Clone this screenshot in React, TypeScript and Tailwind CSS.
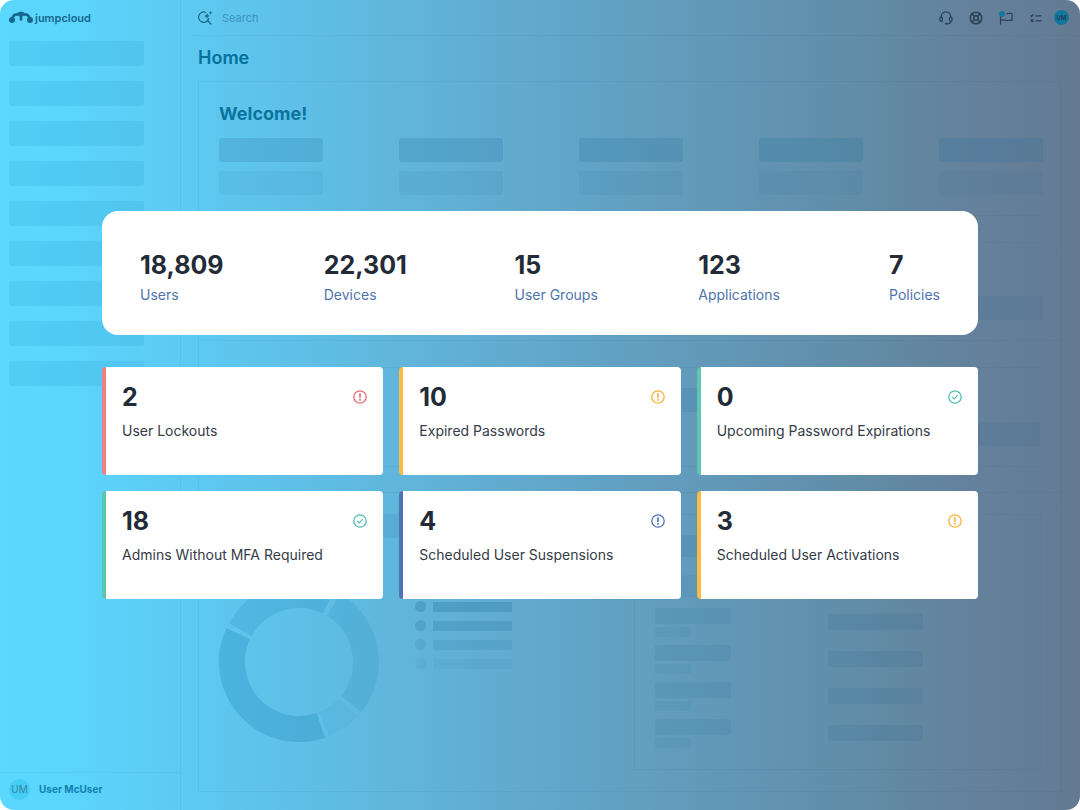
import React from "react";
import { LifeBuoy } from "lucide-react";

const stats = [
  { value: "18,809", label: "Users" },
  { value: "22,301", label: "Devices" },
  { value: "15", label: "User Groups" },
  { value: "123", label: "Applications" },
  { value: "7", label: "Policies" },
];

const alerts = [
  { value: "2", label: "User Lockouts", border: "border-[#f08080]", icon: "text-[#dd6b6f]", ok: false },
  { value: "10", label: "Expired Passwords", border: "border-[#ffb945]", icon: "text-[#fbb034]", ok: false },
  { value: "0", label: "Upcoming Password Expirations", border: "border-[#5fc6b4]", icon: "text-[#52bdb4]", ok: true },
  { value: "18", label: "Admins Without MFA Required", border: "border-[#5ec5a8]", icon: "text-[#52bdb4]", ok: true },
  { value: "4", label: "Scheduled User Suspensions", border: "border-[#5072b8]", icon: "text-[#4a70b5]", ok: false },
  { value: "3", label: "Scheduled User Activations", border: "border-[#ffb945]", icon: "text-[#fbb034]", ok: false },
];

const line = "border-[#1d5f8c]/8";

function Logo() {
  return (
    <div className="flex items-center gap-[2px] text-[#15698f]">
      <svg width="24" height="13" viewBox="0 0 24 13" fill="currentColor">
        <circle cx="3" cy="9" r="3" />
        <circle cx="21" cy="9" r="3" />
        <path
          d="M3 8.500C4 4.500 6.500 3 9 3.600M21 8.500C20 4.500 17.500 3 15 3.600"
          fill="none"
          stroke="currentColor"
          strokeWidth="2.600"
        />
        <path d="M8 2.800C9 0.200 15 0.200 16 2.800L15.500 5.200C14.500 4.200 13.700 5.200 13.300 6V9.500H10.700V6C10.300 5.200 9.500 4.200 8.500 5.200Z" />
      </svg>
      <span className="text-[11px] leading-3 font-semibold">jumpcloud</span>
    </div>
  );
}

function Sidebar() {
  return (
    <aside className={`flex w-[181px] shrink-0 flex-col border-r ${line}`}>
      <div className="px-[9px] pt-[11px]">
        <Logo />
      </div>
      <nav className="flex flex-col gap-[15px] pt-[17px] pr-9 pl-[9px]">
        {Array.from({ length: 9 }).map((_, i) => (
          <div key={i} className="h-[25px] rounded-[3px] bg-[#1b93c4]/16"></div>
        ))}
      </nav>
      <div className={`mt-auto flex h-[38px] items-center gap-[9px] border-t pb-1 pl-[9px] ${line}`}>
        <span className="flex size-[21px] items-center justify-center rounded-full bg-[#45cdf6] text-[10px] text-[#3a86a6]">
          UM
        </span>
        <span className="text-[10px] font-bold text-[#1380b0]">User McUser</span>
      </div>
    </aside>
  );
}

function Header() {
  return (
    <header className={`ml-3 flex h-9 items-center border-b pr-[11px] pl-[5px] ${line}`}>
      <svg
        width="15"
        height="14"
        viewBox="0 0 15 14"
        fill="none"
        stroke="#1a6285"
        strokeWidth="1.200"
        strokeLinecap="round"
      >
        <path d="M7.500 1.200A5.200 5.200 0 1 0 10.800 7.500M9.500 9.500L13 13" />
        <path d="M9 2.500L9.700 4.300L11.500 5L9.700 5.700L9 7.500L8.300 5.700L6.500 5L8.300 4.300Z" fill="#1a6285" strokeWidth="0.300" />
        <path d="M12.500 0.800V2.800M11.500 1.800H13.500" strokeWidth="0.900" />
      </svg>
      <input
        type="search"
        aria-label="Search"
        placeholder="Search"
        className="ml-[9px] h-5 min-w-0 flex-1 bg-transparent pt-px text-[11px] outline-none placeholder:text-[#3c96bd]"
      />
      <div className="flex items-center gap-4 text-[#2a4156]">
        <button aria-label="Support">
          <svg width="14" height="14" viewBox="0 0 14 14" fill="none" stroke="currentColor" strokeWidth="1.200">
            <path d="M2.300 6.500V5.500A4.700 4.700 0 0 1 11.700 5.500V6.500M12 10C12 12 10.500 12.700 8.500 12.700" />
            <rect x="1" y="6.200" width="2.400" height="4.200" rx="1" />
            <rect x="10.600" y="6.200" width="2.400" height="4.200" rx="1" />
            <path d="M6 12.700H8.800" strokeWidth="1.600" />
          </svg>
        </button>
        <button aria-label="Help">
          <LifeBuoy size={14} strokeWidth={2.5} />
        </button>
        <button aria-label="Updates">
          <svg width="14" height="14" viewBox="0 0 14 14" fill="none" stroke="currentColor" strokeWidth="1.200">
            <path d="M1.500 5V13.500M1.500 9.500C4 7.500 6 10 8.500 9.500C10.500 9 11 9 13 9.300V2.500C11 2.200 9.500 2 7.500 3" />
            <circle cx="3" cy="3" r="3" fill="#12779e" stroke="none" />
          </svg>
        </button>
        <button aria-label="Tasks">
          <svg width="14" height="14" viewBox="0 0 14 14" fill="none" stroke="currentColor" strokeWidth="1.200">
            <path d="M1.500 4.500L2.500 5.500L4.500 3.500M6.500 4.800H12.500M6.500 9.800H12.500" />
            <rect x="2.300" y="8.800" width="1.600" height="1.600" />
          </svg>
        </button>
      </div>
      <button
        aria-label="Account"
        className="ml-[11px] flex size-[15px] items-center justify-center rounded-full bg-[#12779e] text-[6px] leading-none font-semibold text-[#1c3c52]"
      >
        UM
      </button>
    </header>
  );
}

function SkeletonRow({ tone }: { tone: string }) {
  return (
    <div className="flex justify-between">
      {Array.from({ length: 5 }).map((_, i) => (
        <div key={i} className={`h-6 w-[104px] rounded-[3px] ${tone}`}></div>
      ))}
    </div>
  );
}

// angles run clockwise from three o'clock
const slices = [
  { start: 71, sweep: 134, opacity: 0.26 },
  { start: 209, sweep: 87, opacity: 0.18 },
  { start: 301, sweep: 98, opacity: 0.15 },
  { start: 43, sweep: 25, opacity: 0.06 },
];

function Donut() {
  return (
    <svg width="160" height="160" viewBox="0 0 160 160" fill="none" stroke="#127fb0" strokeWidth="26">
      {slices.map((s) => (
        <circle
          key={s.start}
          cx="80"
          cy="80"
          r="67"
          pathLength={360}
          strokeDasharray={`${s.sweep} ${360 - s.sweep}`}
          transform={`rotate(${s.start} 80 80)`}
          strokeOpacity={s.opacity}
        />
      ))}
    </svg>
  );
}

const legendTones = ["opacity-100", "opacity-80", "opacity-50", "opacity-25"];

function Backdrop() {
  return (
    <main className="flex min-w-0 flex-1 flex-col">
      <Header />
      <div className="mr-[18px] ml-[17px] flex flex-col pb-[18px]">
        <h1 className="flex h-[45px] items-center pb-[2px] text-[18px] font-semibold text-[#03719b]">Home</h1>
        <div className={`border ${line}`}>
          <section className="h-[258px] pt-5 pr-[18px] pl-5">
            <h2 className="text-[18px] leading-6 font-bold text-[#0a749f]">Welcome!</h2>
            <div className="flex flex-col gap-[9px] pt-3">
              <SkeletonRow tone="bg-[#236f99]/20" />
              <SkeletonRow tone="bg-[#236f99]/9" />
            </div>
            <div className={`mt-5 mb-[53px] h-7 border-y ${line}`}></div>
            <SkeletonRow tone="bg-[#2f6690]/12" />
          </section>
          <section className={`h-[152px] border-t ${line}`}>
            <div className={`mr-[21px] ml-5 mt-[26px] flex h-[100px] items-start justify-between border-y ${line}`}>
              <div className="mt-5 ml-[385px] h-6 w-[100px] bg-[#236f99]/16"></div>
              <div className="mt-[54px] h-6 w-[104px] bg-[#2f6690]/14"></div>
            </div>
          </section>
          <section className={`flex h-[299px] items-start border-t pt-[21px] pr-5 pl-5 ${line}`}>
            <div className="pt-[68px]">
              <Donut />
            </div>
            <div className="ml-1 flex flex-col">
              <div className="h-6 w-[120px] rounded-[3px] bg-[#236f99]/12"></div>
              <div className="mt-[63px] ml-8 flex flex-col gap-2">
                {legendTones.map((tone) => (
                  <div key={tone} className={`flex items-center gap-[7px] ${tone}`}>
                    <span className="size-[11px] rounded-full bg-[#1f7199]/28"></span>
                    <span className="h-[10px] w-[79px] bg-[#1f7199]/28"></span>
                  </div>
                ))}
              </div>
            </div>
            <div className={`ml-auto flex h-[256px] w-[407px] gap-[97px] border pt-5 pl-5 ${line}`}>
              <div className="flex flex-col">
                <div className="h-[22px] w-[75px] bg-[#236f99]/16"></div>
                <div className="mt-[18px] h-[22px] w-[75px] bg-[#236f99]/8"></div>
                <div className="mt-[11px] flex flex-col gap-2">
                  {[1, 2, 3, 4].map((n) => (
                    <div key={n} className="flex flex-col gap-[3px]">
                      <div className="h-4 w-[76px] rounded-[2px] bg-[#287ca3]/15"></div>
                      <div className="h-[10px] w-9 rounded-[2px] bg-[#287ca3]/11"></div>
                    </div>
                  ))}
                </div>
              </div>
              <div className="flex flex-col gap-[21px] pt-[79px]">
                {[1, 2, 3, 4].map((n) => (
                  <div key={n} className="h-4 w-[95px] rounded-[3px] bg-[#2b6a8c]/16"></div>
                ))}
              </div>
            </div>
          </section>
        </div>
      </div>
    </main>
  );
}

function StatsCard() {
  return (
    <section className="grid grid-cols-[184fr_191fr_184fr_191fr_50fr] rounded-2xl bg-white px-[38px] pt-9 pb-7">
      {stats.map((s) => (
        <div key={s.label} className="flex flex-col whitespace-nowrap">
          <span className="text-[25px] leading-9 font-bold text-[#232b37]">{s.value}</span>
          <a href="#" className="text-[14px] leading-6 text-[#4f74ae]">
            {s.label}
          </a>
        </div>
      ))}
    </section>
  );
}

function StatusIcon({ ok, className }: { ok: boolean; className: string }) {
  return (
    <svg width="14" height="14" viewBox="0 0 14 14" fill="none" stroke="currentColor" className={className}>
      <circle cx="7" cy="7" r="6.200" strokeWidth="1.300" />
      {ok ? (
        <path d="M4.300 7.200L6.200 9L9.700 5.200" strokeWidth="1.200" />
      ) : (
        <path d="M7 3.300V7.900M7 9.100V10.700" strokeWidth="1.600" />
      )}
    </svg>
  );
}

function AlertCard({ item }: { item: (typeof alerts)[number] }) {
  return (
    <article className={`h-[108px] rounded-[4px] border-l-4 bg-white px-4 pt-3 ${item.border}`}>
      <div className="flex items-center justify-between">
        <span className="text-[25px] leading-9 font-bold text-[#232b37]">{item.value}</span>
        <StatusIcon ok={item.ok} className={item.icon} />
      </div>
      <p className="pt-1 text-[14px] leading-6 whitespace-nowrap text-[#353b47]">{item.label}</p>
    </article>
  );
}

export default function App() {
  return (
    <div className="bg-white font-[Inter,sans-serif]">
      <div className="relative flex min-h-screen overflow-hidden rounded-[14px] bg-[linear-gradient(90deg,#5bd8ff_0%,#5bd5fd_6%,#5dcaf2_17%,#5fbfe6_28%,#61b2d8_40%,#61a6c9_52%,#6299b9_65%,#618ea9_78%,#64819c_90%,#647a92_100%)]">
        <Sidebar />
        <Backdrop />
        <div className="absolute inset-0 flex flex-col justify-center px-8">
          <div className="mx-auto flex w-full max-w-[876px] flex-col gap-8">
            <StatsCard />
            <div className="grid grid-cols-3 gap-4">
              {alerts.map((a) => (
                <AlertCard key={a.label} item={a} />
              ))}
            </div>
          </div>
        </div>
      </div>
    </div>
  );
}
